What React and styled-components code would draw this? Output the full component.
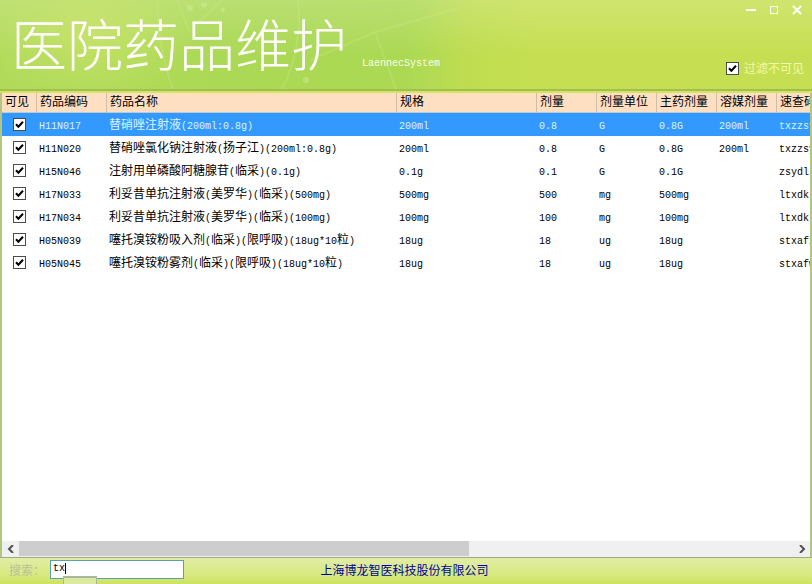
import React, { useState } from "react";
import styled, { createGlobalStyle } from "styled-components";

const GlobalStyle = createGlobalStyle`
  * { box-sizing: border-box; }
  html, body { margin: 0; height: 100%; }
  body {
    font-family: "Noto Sans CJK SC", sans-serif;
    font-size: 12px;
    line-height: 16px;
    color: #000;
    overflow: hidden;
  }
`;

const Window = styled.div`
  height: 100vh;
  display: flex;
  flex-direction: column;
  background: #cbe263;
`;

const Header = styled.header`
  position: relative;
  flex: none;
  height: 93px;
  display: flex;
  justify-content: space-between;
  border-bottom: 2px solid #d3e368;
  background:
    radial-gradient(ellipse 110px 80px at 90px 30px, rgba(208, 230, 110, 0.65), rgba(208, 230, 110, 0) 100%),
    linear-gradient(to bottom, rgba(255, 255, 255, 0.17), rgba(255, 255, 255, 0) 60%),
    linear-gradient(to right, #b0da5a 0, #abd955 30%, #abd954 50%, #c0dd51 58%, #c6df52 66%);
  box-shadow: inset 0 -2px 0 #a1bf4c;
`;

const Backdrop = styled.svg`
  position: absolute;
  top: 0;
  left: 0;
  width: 460px;
  height: 89px;
`;

const Brand = styled.div`
  position: relative;
  display: flex;
  align-items: flex-start;
  gap: 15px;
  padding-left: 11px;
  color: #fff;
`;

const Title = styled.h1`
  margin: 0;
  font-size: 56px;
  line-height: 84px;
  font-weight: 300;
`;

const Subtitle = styled.span`
  margin-top: 56px;
  font-family: "Liberation Mono", monospace;
  font-size: 10px;
  color: #fbfde0;
`;

const HeaderSide = styled.div`
  position: relative;
  display: flex;
  flex-direction: column;
  align-items: flex-end;
  justify-content: space-between;
  padding: 2px 8px 15px 0;
`;

const WindowButtons = styled.div`
  display: flex;
  gap: 7px;
  margin-right: -2px;
`;

const WindowButton = styled.button`
  width: 16px;
  height: 16px;
  padding: 0;
  border: 0;
  background: none;
  svg { display: block; }
`;

const FilterLabel = styled.label`
  display: flex;
  align-items: center;
  gap: 5px;
  color: #f4f8a8;
`;

const tick =
  "url(\"data:image/svg+xml,%3Csvg xmlns='http://www.w3.org/2000/svg' viewBox='0 0 11 11'%3E%3Cpath d='M2 5.2L4.4 7.8L9 2.8' fill='none' stroke='%23000' stroke-width='2'/%3E%3C/svg%3E\")";

const CheckBox = styled.input.attrs({ type: "checkbox" })`
  appearance: none;
  display: block;
  flex: none;
  width: 13px;
  height: 13px;
  margin: 0;
  border: 1px solid #4c4c4c;
  background: #fff;
  &:checked { background: #fff ${tick} center / 11px 11px no-repeat; }
`;

const Content = styled.main`
  flex: 1;
  min-height: 0;
  display: flex;
  flex-direction: column;
  background: #fff;
  border: solid #b2c682;
  border-width: 0 2px;
`;

const TableArea = styled.div`
  flex: 1;
  min-height: 0;
  overflow: hidden;
`;

const Table = styled.table`
  width: 100%;
  min-width: 1760px;
  table-layout: fixed;
  border-collapse: separate;
  border-spacing: 0;
`;

const Col = styled.col`
  width: ${(p) => p.$width};
`;

const HeadCell = styled.th`
  height: 20px;
  padding: 0 0 3px 3px;
  text-align: left;
  font-weight: 400;
  white-space: nowrap;
  background: #ffdfc2;
  border-right: 1px solid #d2bda8;
  border-bottom: 1px solid #b8ccd8;
`;

const Row = styled.tr`
  color: ${(p) => (p.$selected ? "#d8f4ff" : "#000")};
  background: ${(p) => (p.$selected ? "#3399ff" : "#fff")};
`;

const Cell = styled.td`
  height: 23px;
  padding: 1px 0 0 2px;
  white-space: nowrap;
`;

const CheckCell = styled(Cell)`
  padding: 0 0 1px 11px;
`;

const Half = styled.span`
  font-family: "Liberation Mono", monospace;
  font-size: 10px;
`;

const ScrollBar = styled.div`
  flex: none;
  height: 16px;
  display: grid;
  grid-template-columns: 17px 1fr 17px;
  background: #f0f0f0;
`;

const ScrollButton = styled.button`
  padding: 0;
  border: 0;
  background: none;
  display: flex;
  align-items: center;
  justify-content: center;
`;

const Thumb = styled.div`
  width: 58.2%;
  height: 15px;
  background: #cdcdcd;
`;

const Footer = styled.footer`
  position: relative;
  flex: none;
  height: 27px;
  display: grid;
  grid-template-columns: 1fr auto 1fr;
  align-items: center;
  padding: 0 3px 3px 0;
  border-top: 1px solid #a0aa82;
  background: linear-gradient(to bottom, #e2eda6, #d6e87c 70%, #cde35d);
`;

const SearchLabel = styled.label`
  display: grid;
  grid-template-columns: 41px 134px;
  align-items: center;
  padding-left: 9px;
  color: #b9c19a;
`;

const SearchInput = styled.input`
  width: 134px;
  height: 19px;
  padding: 0 2px 2px;
  border: 1px solid #58a0ad;
  outline: none;
  background: #fff;
  color: #000;
  font-family: "Liberation Mono", monospace;
  font-size: 10px;
`;

const Caret = styled.span`
  position: absolute;
  left: 65px;
  top: 5px;
  width: 1px;
  height: 11px;
  background: #000;
`;

const HintBox = styled.span`
  position: absolute;
  left: 63px;
  bottom: 0;
  width: 34px;
  height: 8px;
  border: solid #a9b59a;
  border-width: 2px 1px 0;
  background: #dce9a0;
`;

const Company = styled.a`
  color: #0000a0;
  text-decoration: none;
`;

const widths = ["35px", "70px", "290px", "140px", "60px", "60px", "60px", "60px", "auto"];
const headings = ["可见", "药品编码", "药品名称", "规格", "剂量", "剂量单位", "主药剂量", "溶媒剂量", "速查码"];
const drugs = [
  ["H11N017", "替硝唑注射液(200ml:0.8g)", "200ml", "0.8", "G", "0.8G", "200ml", "txzzsy"],
  ["H11N020", "替硝唑氯化钠注射液(扬子江)(200ml:0.8g)", "200ml", "0.8", "G", "0.8G", "200ml", "txzzsy"],
  ["H15N046", "注射用单磷酸阿糖腺苷(临采)(0.1g)", "0.1g", "0.1", "G", "0.1G", "", "zsydl"],
  ["H17N033", "利妥昔单抗注射液(美罗华)(临采)(500mg)", "500mg", "500", "mg", "500mg", "", "ltxdk"],
  ["H17N034", "利妥昔单抗注射液(美罗华)(临采)(100mg)", "100mg", "100", "mg", "100mg", "", "ltxdk"],
  ["H05N039", "噻托溴铵粉吸入剂(临采)(限呼吸)(18ug*10粒)", "18ug", "18", "ug", "18ug", "", "stxafx"],
  ["H05N045", "噻托溴铵粉雾剂(临采)(限呼吸)(18ug*10粒)", "18ug", "18", "ug", "18ug", "", "stxafw"],
];

// Latin runs take half the width of a Chinese character.
function MixedText({ text }) {
  return text
    .split(/([\x20-\x7e]+)/)
    .filter(Boolean)
    .map((part, i) => (/^[\x20-\x7e]/.test(part) ? <Half key={i}>{part}</Half> : part));
}

export default function App() {
  const [query, setQuery] = useState("tx");
  return (
    <Window>
      <GlobalStyle />
      <Header>
        <Backdrop viewBox="0 0 460 89" aria-hidden="true">
          <g fill="none" stroke="#d4ec95" strokeWidth="2" opacity="0.25">
            <path d="M157 0C158 35 164 65 173 89" />
            <path d="M177 0L189 30M222 0L196 25" />
            <path d="M298 0C302 30 295 64 282 89" />
            <path d="M310 60L375 32L460 8M375 32L396 89" />
          </g>
          <g fill="#daf0a0" opacity="0.4">
            <circle cx="190" cy="8" r="3" />
            <circle cx="204" cy="5" r="3" />
            <circle cx="223" cy="10" r="2" />
            <circle cx="306" cy="80" r="3" />
          </g>
        </Backdrop>
        <Brand>
          <Title>医院药品维护</Title>
          <Subtitle>LaennecSystem</Subtitle>
        </Brand>
        <HeaderSide>
          <WindowButtons>
            <WindowButton aria-label="最小化">
              <svg width="16" height="16"><path d="M2 8H12" stroke="#fff" strokeWidth="2" /></svg>
            </WindowButton>
            <WindowButton aria-label="最大化">
              <svg width="16" height="16"><path d="M3.5 4.5H10.5V11.5H3.5Z" fill="none" stroke="#fff" /></svg>
            </WindowButton>
            <WindowButton aria-label="关闭">
              <svg width="16" height="16"><path d="M3 4L11 12M11 4L3 12" stroke="#fff" strokeWidth="2" /></svg>
            </WindowButton>
          </WindowButtons>
          <FilterLabel>
            <CheckBox defaultChecked />
            过滤不可见
          </FilterLabel>
        </HeaderSide>
      </Header>

      <Content>
        <TableArea>
          <Table>
            <colgroup>{widths.map((w, i) => <Col key={i} $width={w} />)}</colgroup>
            <thead>
              <tr>{headings.map((h) => <HeadCell key={h}>{h}</HeadCell>)}</tr>
            </thead>
            <tbody>
              {drugs.map((drug, i) => (
                <Row key={drug[0]} $selected={i === 0}>
                  <CheckCell>
                    <CheckBox defaultChecked aria-label={`可见 ${drug[0]}`} />
                  </CheckCell>
                  {drug.map((value, j) => (
                    <Cell key={j}><MixedText text={value} /></Cell>
                  ))}
                </Row>
              ))}
            </tbody>
          </Table>
        </TableArea>
        <ScrollBar>
          <ScrollButton aria-label="向左滚动">
            <svg width="8" height="8"><path d="M6 0L2 4L6 8" fill="none" stroke="#505050" strokeWidth="2" /></svg>
          </ScrollButton>
          <Thumb />
          <ScrollButton aria-label="向右滚动">
            <svg width="8" height="8"><path d="M2 0L6 4L2 8" fill="none" stroke="#505050" strokeWidth="2" /></svg>
          </ScrollButton>
        </ScrollBar>
      </Content>

      <Footer>
        <SearchLabel>
          搜索：
          <SearchInput value={query} onChange={(e) => setQuery(e.target.value)} />
        </SearchLabel>
        <Company href="#">上海博龙智医科技股份有限公司</Company>
        <Caret />
        <HintBox />
      </Footer>
    </Window>
  );
}
